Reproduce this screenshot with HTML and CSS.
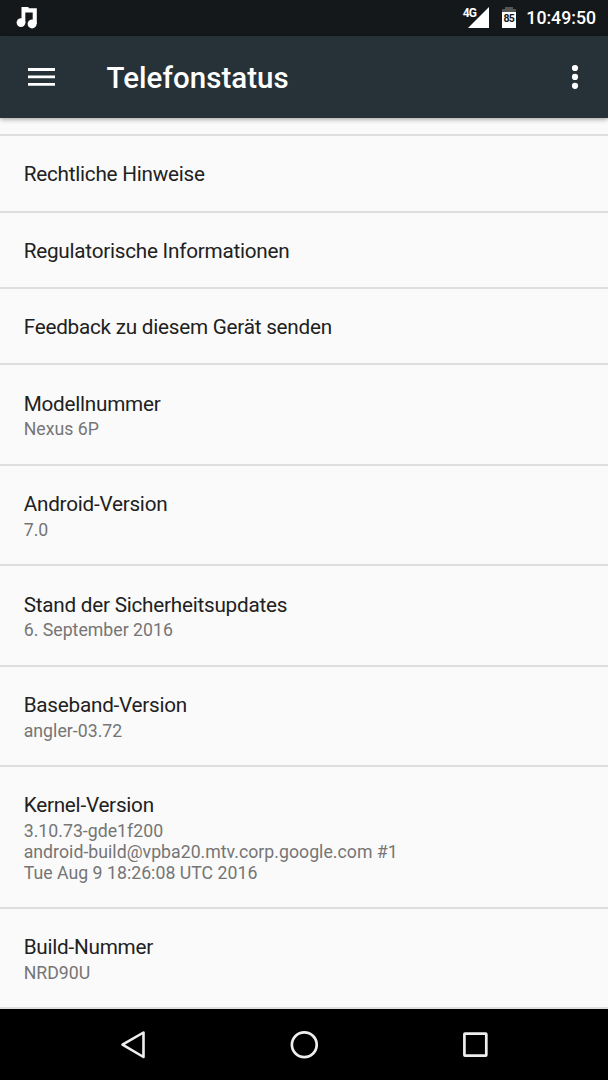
FILE: index.html
```html
<!DOCTYPE html>
<html lang="de">
<head>
<meta charset="utf-8">
<title>Telefonstatus</title>
<link rel="stylesheet" href="styles.css">
</head>
<body>
<div class="screen">
  <div class="status-bar">
    <svg class="note" width="22" height="24" viewBox="0 0 22 24" fill="#fff"><path d="M5.500 1h7v1.200h8.300v15.800h-4.100V6.600H9.300v10.100H5.500z"/><circle cx="5" cy="16.600" r="4.400"/><circle cx="16.100" cy="17.900" r="4.500"/></svg>
    <div class="status-icons">
      <span class="network">4G</span>
      <svg class="signal" width="21" height="21" viewBox="0 0 21 21"><path d="M21 0v21H0z" fill="#fff"/></svg>
      <span class="battery">85</span>
      <span class="clock">10:49:50</span>
    </div>
  </div>
  <header class="app-bar">
    <svg class="menu" width="28" height="20" viewBox="0 0 28 20"><path d="M0 2.500h27M0 9.900h27M0 17.300h27" stroke="#fff" stroke-width="2.800"/></svg>
    <h1 class="heading">Telefonstatus</h1>
    <svg class="more" width="8" height="26" viewBox="0 0 8 26" fill="#fff"><circle cx="4" cy="4" r="3.100"/><circle cx="4" cy="12.900" r="3.100"/><circle cx="4" cy="21.800" r="3.100"/></svg>
  </header>
  <main class="list">
    <div class="row row-cut"></div>
    <div class="row"><div class="title">Rechtliche Hinweise</div></div>
    <div class="row"><div class="title">Regulatorische Informationen</div></div>
    <div class="row"><div class="title">Feedback zu diesem Gerät senden</div></div>
    <div class="row row-double"><div class="title">Modellnummer</div><div class="summary">Nexus 6P</div></div>
    <div class="row row-double"><div class="title">Android-Version</div><div class="summary">7.0</div></div>
    <div class="row row-double"><div class="title">Stand der Sicherheitsupdates</div><div class="summary">6. September 2016</div></div>
    <div class="row row-double"><div class="title">Baseband-Version</div><div class="summary">angler-03.72</div></div>
    <div class="row row-kernel"><div class="title">Kernel-Version</div><div class="summary">3.10.73-gde1f200<br>android-build@vpba20.mtv.corp.google.com #1<br>Tue Aug 9 18:26:08 UTC 2016</div></div>
    <div class="row row-double"><div class="title">Build-Nummer</div><div class="summary">NRD90U</div></div>
  </main>
  <nav class="nav-bar">
    <svg width="28" height="30" viewBox="0 0 28 30"><path d="M24.500 2.500v24.500L3.500 14.700z" fill="none" stroke="#eee" stroke-width="2.600" stroke-linejoin="round"/></svg>
    <svg width="28" height="30" viewBox="0 0 28 30"><circle cx="14.300" cy="14.700" r="12.400" fill="none" stroke="#eee" stroke-width="2.700"/></svg>
    <svg width="28" height="30" viewBox="0 0 28 30"><rect x="3.400" y="3.700" width="21.900" height="21.900" rx="0.600" fill="none" stroke="#eee" stroke-width="2.700"/></svg>
  </nav>
</div>
</body>
</html>
```
FILE: styles.css
```css
body {
  margin: 0;
  font-family: Roboto, sans-serif;
  background: #fafafa;
}

.screen {
  display: flex;
  flex-direction: column;
  width: 608px;
  height: 1080px;
  overflow: hidden;
}

.status-bar {
  display: flex;
  flex: none;
  justify-content: space-between;
  box-sizing: border-box;
  height: 36px;
  padding: 0 12px 0 16px;
  background: #14181a;
  color: #fff;
}

.note {
  margin-top: 6px;
}

.status-icons {
  display: flex;
  align-items: flex-start;
}

.network {
  width: 13px;
  margin: 6px -7.500px 0 0;
  font-size: 12px;
  font-weight: 700;
  line-height: 14px;
  letter-spacing: -1.100px;
}

.signal {
  margin-top: 7px;
}

.battery {
  width: 14px;
  height: 21px;
  margin: 7px 10.500px 0 12.500px;
  background: linear-gradient(#555, #555) center top / 8px 2px no-repeat,
    linear-gradient(#555 3px, #fff 3px) center bottom / 14px 19px no-repeat;
  color: #14181a;
  font-size: 10.5px;
  font-weight: 700;
  line-height: 23px;
  letter-spacing: -0.6px;
  text-align: center;
}

.clock {
  font-size: 17.7px;
  font-weight: 500;
  line-height: 37px;
}

.app-bar {
  display: flex;
  flex: none;
  align-items: center;
  position: relative;
  z-index: 1;
  box-sizing: border-box;
  height: 82px;
  padding: 0 28.800px 0 28px;
  background: #263238;
  box-shadow: 0 1px 5px rgba(0, 0, 0, 0.4);
  color: #fff;
}

.heading {
  margin: 2px 0 0 50.500px;
  font-size: 29.5px;
  font-weight: 500;
  line-height: 36px;
  letter-spacing: 0.050px;
}

.more {
  margin-left: auto;
}

.list {
  flex: none;
  height: 891px;
  overflow: hidden;
}

.row {
  box-sizing: border-box;
  height: 76.400px;
  padding: 26.300px 23.700px 0;
  border-bottom: 2px solid #dedede;
}

.row-cut {
  height: 18.200px;
  padding: 0;
}

.row-double {
  height: 100.450px;
}

.row-kernel {
  height: 141.600px;
}

.title {
  color: #212121;
  font-size: 20.700px;
  line-height: 25px;
  letter-spacing: -0.235px;
}

.summary {
  margin-top: 2.700px;
  color: #757575;
  font-size: 17.700px;
  line-height: 20.750px;
  letter-spacing: 0.020px;
}

.nav-bar {
  display: flex;
  flex: none;
  justify-content: space-between;
  box-sizing: border-box;
  height: 71px;
  padding: 21px 119px 0;
  background: #000;
}
```
